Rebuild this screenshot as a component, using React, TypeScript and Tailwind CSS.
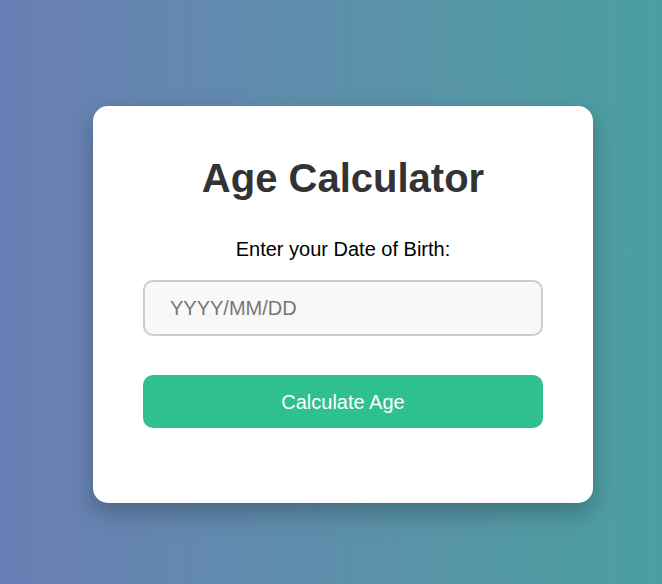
import { useState } from 'react';

export default function App() {
  const [dob, setDob] = useState('');

  return (
    <div className="w-[662px] h-[584px] bg-gradient-to-r from-[#6a7eb5] to-[#4aa0a0] pt-[106px] pl-[93px] font-['Liberation_Sans',Arial,sans-serif]">
      <div className="w-[500px] bg-white rounded-[15px] shadow-[0_10px_25px_rgba(0,0,0,0.25)] pt-[49px] pb-[75px] px-[50px] flex flex-col items-center">
        <h1 className="text-[40px] leading-[46px] font-bold text-[#333]">Age Calculator</h1>
        <label className="mt-[37px] text-[20px] leading-[23px] text-black">Enter your Date of Birth:</label>
        <input
          value={dob}
          onChange={(e) => setDob(e.target.value)}
          placeholder="YYYY/MM/DD"
          className="mt-[19px] w-[400px] h-[56px] border-2 border-[#ccc] rounded-[10px] bg-[#f8f8f8] pl-[25px] text-[20px] placeholder:text-[#777] outline-none"
        />
        <button className="mt-[39px] w-[400px] h-[53px] rounded-[10px] bg-[#2ec08e] text-white text-[20px]">
          Calculate Age
        </button>
      </div>
    </div>
  );
}
